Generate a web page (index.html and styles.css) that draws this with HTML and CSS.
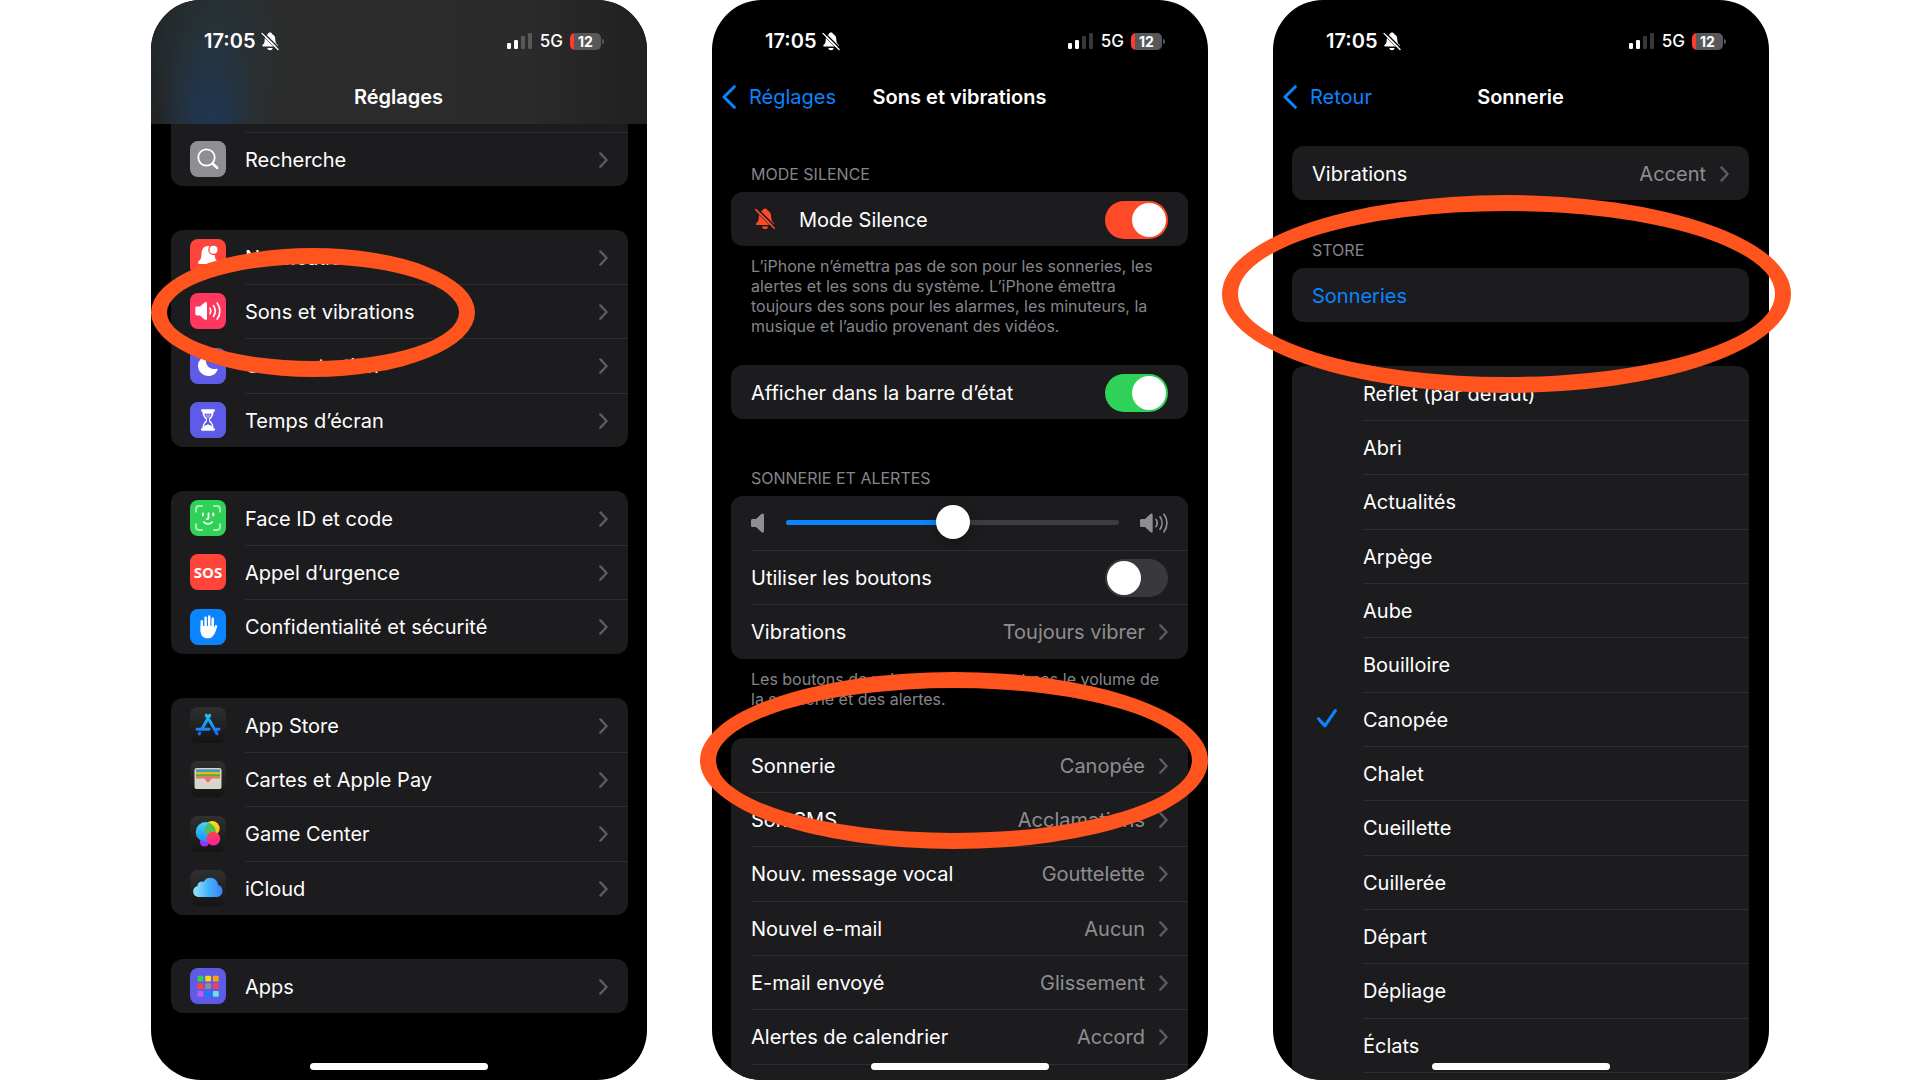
FILE: index.html
```html
<!DOCTYPE html>
<html lang="fr">
<head>
<meta charset="utf-8">
<title>Réglages – Sons et vibrations – Sonnerie</title>
<link rel="stylesheet" href="styles.css">
</head>
<body>
<svg class="sprite" aria-hidden="true">
  <defs>
    <linearGradient id="g-dark" x1="0" y1="0" x2="0" y2="1"><stop offset="0" stop-color="#303031"/><stop offset="1" stop-color="#141415"/></linearGradient>
    <linearGradient id="g-store" gradientUnits="userSpaceOnUse" x1="0" y1="6" x2="0" y2="29"><stop offset="0" stop-color="#1ccbfb"/><stop offset="1" stop-color="#1a62f5"/></linearGradient>
    <linearGradient id="g-cloud" x1="0" y1="0" x2="1" y2="0"><stop offset="0" stop-color="#9be3fd"/><stop offset=".5" stop-color="#46b4fb"/><stop offset="1" stop-color="#3b7ff5"/></linearGradient>
    <linearGradient id="g-blue" x1="0" y1="0" x2="0" y2="1"><stop offset="0" stop-color="#45d5fb"/><stop offset="1" stop-color="#1a8df8"/></linearGradient>
    <linearGradient id="g-yellow" x1="0" y1="0" x2="1" y2="1"><stop offset="0" stop-color="#f7f017"/><stop offset="1" stop-color="#fdb813"/></linearGradient>
    <linearGradient id="g-pink" x1="0" y1="0" x2="0" y2="1"><stop offset="0" stop-color="#fd4052"/><stop offset="1" stop-color="#fb1fa5"/></linearGradient>
    <symbol id="chevron" viewBox="0 0 9 16"><path d="M1.400 1.400 7.600 8l-6.200 6.600" fill="none" stroke="currentColor" stroke-width="2.400" stroke-linecap="round" stroke-linejoin="round"/></symbol>
    <symbol id="back" viewBox="0 0 14 24"><path d="M12.300 1.700 2 12l10.300 10.300" fill="none" stroke="currentColor" stroke-width="3" stroke-linecap="round" stroke-linejoin="round"/></symbol>
    <symbol id="bell-off" viewBox="0 0 20 22">
      <path d="M10 .6c1.300 0 2.300.8 2.600 2 2.300.9 3.400 2.900 3.500 5.700.1 3.700.9 5.100 2.600 6.600.7.6.6 2-.6 2H2.100c-1.200 0-1.300-1.400-.6-2 1.700-1.500 2.300-2.900 2.400-6.600.1-2.800 1.200-4.800 3.500-5.700.3-1.200 1.300-2 2.600-2zM6.900 18.500h6.200c-.3 1.600-1.500 2.600-3.100 2.600s-2.800-1-3.100-2.600z" fill="currentColor"/>
      <path d="M1.900.2 21 19.300" stroke="var(--behind)" stroke-width="1.600"/>
      <path d="M.2 2.700 18.700 21" stroke="var(--behind)" stroke-width="1"/>
      <path d="M.8 1.600 19.300 20.300" stroke="currentColor" stroke-width="1.600" stroke-linecap="round"/>
    </symbol>
    <symbol id="signal" viewBox="0 0 25 16">
      <rect x="0" y="10" width="4" height="6" rx="1.200" fill="#fff"/><rect x="7" y="7" width="4" height="9" rx="1.200" fill="#fff"/>
      <rect x="14" y="3" width="4" height="13" rx="1.200" fill="#fff" opacity=".22"/><rect x="21" y="0" width="4" height="16" rx="1.200" fill="#fff" opacity=".22"/>
    </symbol>
    <symbol id="speaker" viewBox="0 0 14 20"><path d="M0 7.500C0 6.500.7 6 1.600 6H5L10.400 1c1.100-1 2.600-.6 2.600 1v16c0 1.600-1.500 2-2.600 1L5 14H1.600C.7 14 0 13.500 0 12.500z" fill="currentColor"/></symbol>
    <symbol id="speaker-loud" viewBox="0 0 28 20">
      <path d="M0 7.500C0 6.500.7 6 1.600 6H5L10.400 1c1.100-1 2.300-.6 2.300 1v16c0 1.600-1.200 2-2.300 1L5 14H1.600C.7 14 0 13.500 0 12.500z" fill="currentColor"/>
      <path d="M16 6.500c1.400 2 1.400 5 0 7M20 3.800c2.700 3.700 2.700 8.700 0 12.400M24 1.200c3.900 5.300 3.900 12.300 0 17.600" fill="none" stroke="currentColor" stroke-width="1.700" stroke-linecap="round"/>
    </symbol>
    <symbol id="i-search" viewBox="0 0 36 36"><rect width="36" height="36" rx="8" fill="#8e8e93"/><circle cx="16.500" cy="16.500" r="8.200" fill="none" stroke="#fff" stroke-width="1.800"/><path d="m22.500 22.500 4.600 4.300" stroke="#fff" stroke-width="2.600" stroke-linecap="round"/></symbol>
    <symbol id="i-notif" viewBox="0 0 36 36"><rect width="36" height="36" rx="8" fill="#ff453a"/><path d="M18 7c-4.300 0-6.300 3-6.500 8-.1 4-.8 5.400-2.700 7.300-1.300 1.300-.9 2.700.6 2.700h17.200c1.500 0 1.900-1.400.6-2.700-1.500-1.500-2.300-3.300-2.600-6.300-4 0-6.300-2.300-6.300-5.300 0-1.400.4-2.600 1.200-3.500zM14.500 26.500h7c-.4 1.700-1.700 2.700-3.500 2.700s-3.100-1-3.500-2.700z" fill="#fff"/><circle cx="23.500" cy="10.700" r="4" fill="#fff"/></symbol>
    <symbol id="i-sound" viewBox="0 0 36 36"><rect width="36" height="36" rx="8" fill="#ff375f"/><path d="M5.300 15.200c0-1 .6-1.600 1.600-1.600h3l4.700-4.200c1-.9 2.400-.5 2.400 1v15.200c0 1.500-1.400 1.900-2.400 1L9.900 22.400h-3c-1 0-1.600-.6-1.600-1.600z" fill="#fff"/><path d="M20 15.300c1 1.700 1 3.700 0 5.400M23.500 12.600c2.200 3.300 2.200 7.500 0 10.800M27.200 9.900c3.500 4.800 3.500 11.400 0 16.200" fill="none" stroke="#fff" stroke-width="1.700" stroke-linecap="round"/></symbol>
    <symbol id="i-moon" viewBox="0 0 36 36"><rect width="36" height="36" rx="8" fill="#5e5ce6"/><path d="M15.500 8.200c.8-.3 1.400.3 1 1.200-2.300 6.800 2.700 12.800 9.800 11.300 1-.2 1.600.4 1.200 1.300C26 25.700 22.700 28 18.700 28 12.800 28 8 23.600 8 17.800c0-4.500 3-8.200 7.500-9.600z" fill="#fff"/></symbol>
    <symbol id="i-hourglass" viewBox="0 0 36 36"><rect width="36" height="36" rx="8" fill="#5e5ce6"/><path d="M12.500 7.200h11c1 0 1.500.5 1.500 1.300 0 .7-.5 1.200-1.300 1.200-.2 3.800-1.800 6-4 8.300 2.200 2.300 3.800 4.500 4 8.300.8 0 1.300.5 1.300 1.200 0 .8-.5 1.300-1.500 1.300h-11c-1 0-1.500-.5-1.500-1.300 0-.7.5-1.200 1.300-1.200.2-3.800 1.800-6 4-8.300-2.200-2.300-3.800-4.500-4-8.300-.8 0-1.300-.5-1.300-1.200 0-.8.500-1.300 1.500-1.300z" fill="#fff"/><path d="M14.200 11.800h7.600c-.5 1.900-1.500 3.400-2.800 4.700v3c1.300 1.300 2.600 2.800 2.900 4.700L18 22.300l-3.900 1.900c.3-1.900 1.600-3.400 2.900-4.700v-3c-1.300-1.300-2.300-2.800-2.800-4.700z" fill="#5e5ce6"/><path d="M15 12.800h6l-3 4z" fill="#fff" opacity=".4"/></symbol>
    <symbol id="i-face" viewBox="0 0 36 36"><rect width="36" height="36" rx="8" fill="#30d158"/><path d="M6 12.500V9.200C6 7 7.200 6 9.200 6h3.600M23.200 6h3.600C28.900 6 30 7 30 9.200v3.300M30 23.500v3.300c0 2.200-1.100 3.200-3.200 3.200h-3.600M12.800 30H9.200C7.200 30 6 29 6 26.800v-3.300" fill="none" stroke="#a5ecb7" stroke-width="2"/><path d="M13 13.500v2M23.300 13.500v2M18.500 13.500v4.300c0 .9-.6 1.400-1.600 1.400M13.800 22.200c2.400 2.200 6 2.200 8.400 0" fill="none" stroke="#fff" stroke-width="1.800" stroke-linecap="round"/></symbol>
    <symbol id="i-hand" viewBox="0 0 36 36"><rect width="36" height="36" rx="8" fill="#0a84ff"/><path d="M11.800 12.200V22M15.600 8.800V20M19.200 7.600V20M22.700 9.700V21M26 17.300 23.500 24" stroke="#fff" stroke-width="2.500" stroke-linecap="round"/><path d="M10.600 17h13.200v3.500l2.200-2.300c0 2.600-1 6-2.600 8.200-1.300 1.900-3.100 2.900-5.700 2.900-4.600 0-7.100-2.700-7.100-7.300z" fill="#fff"/></symbol>
    <symbol id="i-store" viewBox="0 0 36 36"><rect width="36" height="36" rx="8" fill="url(#g-dark)"/><g fill="none" stroke="url(#g-store)" stroke-width="3" stroke-linecap="round"><path d="m19.800 8.200-7.600 13.300M16.200 8.200l1.200 2M19.500 13.500 27 26.800M7 22.300h12M24.500 22.300H29M9.700 26l-.5.900"/></g></symbol>
    <symbol id="i-wallet" viewBox="0 0 36 36"><rect width="36" height="36" rx="8" fill="url(#g-dark)"/><rect x="4.500" y="7" width="27" height="21" rx="2" fill="#d8d6cc"/><path d="M6 8.300h24v3H6z" fill="#429bbd"/><path d="M6 11h24v2.500H6z" fill="#f7b016"/><path d="M6 13.200h24v2.500H6z" fill="#4bae45"/><path d="M6 15.500h24v2h-8c-1.300 0-2 3.700-4 3.700s-2.700-3.700-4-3.700H6z" fill="#f26e5e"/></symbol>
    <symbol id="i-game" viewBox="0 0 36 36"><rect width="36" height="36" rx="8" fill="url(#g-dark)"/><circle cx="14.500" cy="26" r="4.600" fill="#9a2ff5"/><circle cx="22.200" cy="12.600" r="7.500" fill="url(#g-yellow)"/><circle cx="15.700" cy="16" r="10" fill="url(#g-blue)"/><path d="M15 14.500c0-3 .9-5.200 3.300-7.800 4.700 1.300 7.400 5 7.400 9.300 0 1.400-.2 2.400-.6 3.300C19.500 21 15 18.500 15 14.500z" fill="#50bf55"/><circle cx="23.300" cy="22.600" r="6.900" fill="url(#g-pink)"/></symbol>
    <symbol id="i-cloud" viewBox="0 0 36 36"><rect width="36" height="36" rx="8" fill="url(#g-dark)"/><path d="M9 27c-3.400 0-5.800-2.300-5.800-5.500 0-2.700 1.600-4.800 4.200-5.400.1-3.600 3.400-5.400 6.200-4.200C15 9.300 17.300 7.700 20.200 7.700c4.300 0 7.800 3.200 8 7.400 2.600.7 4.300 3 4.300 5.800 0 3.500-2.600 6.100-6.200 6.100z" fill="url(#g-cloud)"/></symbol>
    <symbol id="i-apps" viewBox="0 0 36 36"><rect width="36" height="36" rx="8" fill="#5e5ce6"/><g><rect x="7.500" y="7.700" width="5.800" height="5.800" rx="1" fill="#30d158"/><rect x="15.200" y="7.700" width="5.800" height="5.800" rx="1" fill="#ffd60a"/><rect x="22.900" y="7.700" width="5.800" height="5.800" rx="1" fill="#ff9f0a"/><rect x="7.500" y="15.300" width="5.800" height="5.800" rx="1" fill="#ff453a"/><rect x="15.200" y="15.300" width="5.800" height="5.800" rx="1" fill="#8e8e93"/><rect x="22.900" y="15.300" width="5.800" height="5.800" rx="1" fill="#ff375f"/><rect x="7.500" y="23" width="5.800" height="5.800" rx="1" fill="#bf5af2"/><rect x="15.200" y="23" width="5.800" height="5.800" rx="1" fill="#0a84ff"/><rect x="22.900" y="23" width="5.800" height="5.800" rx="1" fill="#66e5e0"/></g></symbol>
  </defs>
</svg>

<main class="stage">
  <section class="shot">
    <div class="phone">
      <header class="bar bar-tinted">
        <div class="status"><span class="time">17:05</span><svg class="status-bell"><use href="#bell-off"/></svg><svg class="signal"><use href="#signal"/></svg><span class="network">5G</span><span class="battery">12</span></div>
        <div class="nav"><h1 class="nav-title">Réglages</h1></div>
      </header>
      <div class="content">
        <nav class="group group-cut">
          <a class="row row-divided" href="#"><svg class="icon"><use href="#i-search"/></svg><span class="cell">Recherche<svg class="chevron"><use href="#chevron"/></svg></span></a>
        </nav>
        <nav class="group">
          <a class="row" href="#"><svg class="icon"><use href="#i-notif"/></svg><span class="cell">Notifications<svg class="chevron"><use href="#chevron"/></svg></span></a>
          <a class="row" href="#"><svg class="icon"><use href="#i-sound"/></svg><span class="cell">Sons et vibrations<svg class="chevron"><use href="#chevron"/></svg></span></a>
          <a class="row" href="#"><svg class="icon"><use href="#i-moon"/></svg><span class="cell">Concentration<svg class="chevron"><use href="#chevron"/></svg></span></a>
          <a class="row" href="#"><svg class="icon"><use href="#i-hourglass"/></svg><span class="cell">Temps d’écran<svg class="chevron"><use href="#chevron"/></svg></span></a>
        </nav>
        <nav class="group">
          <a class="row" href="#"><svg class="icon"><use href="#i-face"/></svg><span class="cell">Face ID et code<svg class="chevron"><use href="#chevron"/></svg></span></a>
          <a class="row" href="#"><span class="icon icon-sos">SOS</span><span class="cell">Appel d’urgence<svg class="chevron"><use href="#chevron"/></svg></span></a>
          <a class="row" href="#"><svg class="icon"><use href="#i-hand"/></svg><span class="cell">Confidentialité et sécurité<svg class="chevron"><use href="#chevron"/></svg></span></a>
        </nav>
        <nav class="group">
          <a class="row" href="#"><svg class="icon"><use href="#i-store"/></svg><span class="cell">App Store<svg class="chevron"><use href="#chevron"/></svg></span></a>
          <a class="row" href="#"><svg class="icon"><use href="#i-wallet"/></svg><span class="cell">Cartes et Apple Pay<svg class="chevron"><use href="#chevron"/></svg></span></a>
          <a class="row" href="#"><svg class="icon"><use href="#i-game"/></svg><span class="cell">Game Center<svg class="chevron"><use href="#chevron"/></svg></span></a>
          <a class="row" href="#"><svg class="icon"><use href="#i-cloud"/></svg><span class="cell">iCloud<svg class="chevron"><use href="#chevron"/></svg></span></a>
        </nav>
        <nav class="group">
          <a class="row" href="#"><svg class="icon"><use href="#i-apps"/></svg><span class="cell">Apps<svg class="chevron"><use href="#chevron"/></svg></span></a>
        </nav>
      </div>
      <div class="home-indicator"></div>
    </div>
    <div class="ring ring-sounds"></div>
  </section>

  <section class="shot">
    <div class="phone">
      <header class="bar">
        <div class="status"><span class="time">17:05</span><svg class="status-bell"><use href="#bell-off"/></svg><svg class="signal"><use href="#signal"/></svg><span class="network">5G</span><span class="battery">12</span></div>
        <div class="nav"><a class="nav-back" href="#"><svg class="back-arrow"><use href="#back"/></svg>Réglages</a><h1 class="nav-title">Sons et vibrations</h1></div>
      </header>
      <div class="content content-detail">
        <h2 class="section-label">MODE SILENCE</h2>
        <div class="group">
          <div class="row"><svg class="mode-bell"><use href="#bell-off"/></svg><span class="cell"><label for="silence">Mode Silence</label><input class="switch switch-red" type="checkbox" id="silence" checked></span></div>
        </div>
        <p class="footnote">L’iPhone n’émettra pas de son pour les sonneries, les alertes et les sons du système. L’iPhone émettra toujours des sons pour les alarmes, les minuteurs, la musique et l’audio provenant des vidéos.</p>
        <div class="group group-near">
          <div class="row"><span class="cell"><label for="statusbar">Afficher dans la barre d’état</label><input class="switch" type="checkbox" id="statusbar" checked></span></div>
        </div>
        <h2 class="section-label section-label-far">SONNERIE ET ALERTES</h2>
        <div class="group">
          <div class="row"><span class="cell volume"><svg class="volume-low"><use href="#speaker"/></svg><input class="slider" type="range" min="0" max="100" value="50" aria-label="Volume de la sonnerie"><svg class="volume-high"><use href="#speaker-loud"/></svg></span></div>
          <div class="row"><span class="cell"><label for="buttons">Utiliser les boutons</label><input class="switch" type="checkbox" id="buttons"></span></div>
          <a class="row" href="#"><span class="cell">Vibrations<span class="value">Toujours vibrer</span><svg class="chevron"><use href="#chevron"/></svg></span></a>
        </div>
        <p class="footnote">Les boutons de volume n’affecteront pas le volume de la sonnerie et des alertes.</p>
        <nav class="group group-near">
          <a class="row" href="#"><span class="cell">Sonnerie<span class="value">Canopée</span><svg class="chevron"><use href="#chevron"/></svg></span></a>
          <a class="row" href="#"><span class="cell">Son SMS<span class="value">Acclamations</span><svg class="chevron"><use href="#chevron"/></svg></span></a>
          <a class="row" href="#"><span class="cell">Nouv. message vocal<span class="value">Gouttelette</span><svg class="chevron"><use href="#chevron"/></svg></span></a>
          <a class="row" href="#"><span class="cell">Nouvel e-mail<span class="value">Aucun</span><svg class="chevron"><use href="#chevron"/></svg></span></a>
          <a class="row" href="#"><span class="cell">E-mail envoyé<span class="value">Glissement</span><svg class="chevron"><use href="#chevron"/></svg></span></a>
          <a class="row" href="#"><span class="cell">Alertes de calendrier<span class="value">Accord</span><svg class="chevron"><use href="#chevron"/></svg></span></a>
          <div class="row"><span class="cell"></span></div>
        </nav>
      </div>
      <div class="home-indicator"></div>
    </div>
    <div class="ring ring-ringtone"></div>
  </section>

  <section class="shot">
    <div class="phone">
      <header class="bar">
        <div class="status"><span class="time">17:05</span><svg class="status-bell"><use href="#bell-off"/></svg><svg class="signal"><use href="#signal"/></svg><span class="network">5G</span><span class="battery">12</span></div>
        <div class="nav"><a class="nav-back" href="#"><svg class="back-arrow"><use href="#back"/></svg>Retour</a><h1 class="nav-title">Sonnerie</h1></div>
      </header>
      <div class="content content-detail content-spaced">
        <nav class="group">
          <a class="row" href="#"><span class="cell">Vibrations<span class="value">Accent</span><svg class="chevron"><use href="#chevron"/></svg></span></a>
        </nav>
        <h2 class="section-label">STORE</h2>
        <nav class="group">
          <a class="row row-link" href="#"><span class="cell">Sonneries</span></a>
        </nav>
        <div class="group" role="radiogroup" aria-label="Sonnerie">
          <label class="row"><input class="tick" type="radio" name="tone"><span class="cell">Reflet (par défaut)</span></label>
          <label class="row"><input class="tick" type="radio" name="tone"><span class="cell">Abri</span></label>
          <label class="row"><input class="tick" type="radio" name="tone"><span class="cell">Actualités</span></label>
          <label class="row"><input class="tick" type="radio" name="tone"><span class="cell">Arpège</span></label>
          <label class="row"><input class="tick" type="radio" name="tone"><span class="cell">Aube</span></label>
          <label class="row"><input class="tick" type="radio" name="tone"><span class="cell">Bouilloire</span></label>
          <label class="row"><input class="tick" type="radio" name="tone" checked><span class="cell">Canopée</span></label>
          <label class="row"><input class="tick" type="radio" name="tone"><span class="cell">Chalet</span></label>
          <label class="row"><input class="tick" type="radio" name="tone"><span class="cell">Cueillette</span></label>
          <label class="row"><input class="tick" type="radio" name="tone"><span class="cell">Cuillerée</span></label>
          <label class="row"><input class="tick" type="radio" name="tone"><span class="cell">Départ</span></label>
          <label class="row"><input class="tick" type="radio" name="tone"><span class="cell">Dépliage</span></label>
          <label class="row"><input class="tick" type="radio" name="tone"><span class="cell">Éclats</span></label>
          <div class="row"><span class="tick"></span><span class="cell"></span></div>
        </div>
      </div>
      <div class="home-indicator"></div>
    </div>
    <div class="ring ring-store"></div>
  </section>
</main>
</body>
</html>
```
FILE: styles.css
```css
* {
  box-sizing: border-box;
}

body {
  margin: 0;
  background: #fff;
  color: #fff;
  font-family: Inter, "Liberation Sans", sans-serif;
  font-size: 20px;
  line-height: 24px;
}

a {
  color: inherit;
  text-decoration: none;
}

h1,
h2,
p {
  margin: 0;
}

.sprite {
  position: absolute;
  width: 0;
  height: 0;
}

.stage {
  display: flex;
  gap: 65px;
  height: 100vh;
  padding: 0 151px;
  overflow: hidden;
}

.shot {
  position: relative;
  flex: 1 1 0;
  min-width: 0;
}

.phone {
  position: relative;
  height: 100%;
  overflow: hidden;
  border-radius: 50px;
  background: #000;
}

/* Status and navigation bars */

.bar {
  --behind: #000;
}

.bar-tinted {
  --behind: #292b2c;
  background:
    radial-gradient(ellipse 52px 100px at 58px 124px, #1f3754, transparent),
    radial-gradient(ellipse 80px 120px at 62px 50px, #26343a, transparent),
    linear-gradient(to right, #212223, #2c2c2c 20%, #2b2b2b 75%, #202020);
}

.status {
  display: flex;
  align-items: center;
  height: 70px;
  padding: 12px 43px 0 53px;
}

.time {
  font-weight: 600;
}

.status-bell {
  width: 18px;
  height: 19px;
  margin-left: 6px;
}

.signal {
  width: 25px;
  height: 16px;
  margin-left: auto;
}

.network {
  margin-left: 8px;
  font-size: 17px;
  font-weight: 500;
}

.battery {
  position: relative;
  width: 31px;
  height: 17px;
  margin: 0 3px 0 7px;
  border-radius: 5px;
  background: linear-gradient(to right, #ff3b30 4px, #58585a 4px);
  font-size: 14px;
  font-weight: 700;
  line-height: 17px;
  text-align: center;
}

.battery::after {
  content: "";
  position: absolute;
  top: 6px;
  right: -3px;
  width: 2px;
  height: 5px;
  border-radius: 0 2px 2px 0;
  background: #58585a;
}

.nav {
  display: grid;
  grid-template-columns: 1fr auto 1fr;
  align-items: center;
  height: 54px;
  padding: 0 11px 0 10px;
}

.nav-back {
  display: flex;
  align-items: center;
  gap: 13px;
  color: #0a84ff;
}

.back-arrow {
  width: 14px;
  height: 24px;
}

.nav-title {
  grid-column: 2;
  font-size: 20px;
  font-weight: 600;
}

/* Grouped lists */

.content {
  padding: 0 19px 0 20px;
}

.content-detail {
  padding: 0 20px 0 19px;
}

.content-spaced {
  padding-top: 22px;
}

.group {
  overflow: hidden;
  border-radius: 12px;
  background: #1c1c1e;
}

.group + .group {
  margin-top: 44px;
}

.group-cut {
  padding-top: 8px;
  border-radius: 0 0 12px 12px;
}

.group-near {
  margin-top: 29px;
}

.row {
  display: flex;
  align-items: center;
  height: 54px;
  padding-left: 20px;
}

.row:nth-child(3n) {
  height: 55px;
}

.row-link {
  color: #0a84ff;
}

.row:has(.icon) {
  padding-left: 19px;
}

.cell {
  display: flex;
  flex: 1;
  align-items: center;
  align-self: stretch;
  padding-right: 20px;
  border-top: 1px solid transparent;
}

.row + .row .cell,
.row-divided .cell {
  border-top-color: #2e2e31;
}

.icon {
  width: 36px;
  height: 36px;
  margin-right: 19px;
}

.icon-sos {
  border-radius: 8px;
  background: #ff453a;
  font-family: "Liberation Sans Narrow", "Open Sans", sans-serif;
  font-size: 15px;
  font-weight: 700;
  line-height: 36px;
  text-align: center;
}

.chevron {
  width: 9px;
  height: 16px;
  margin-left: auto;
  color: #5c5c60;
}

.value {
  margin-left: auto;
  color: #8e8e93;
}

.value + .chevron {
  margin-left: 14px;
}

.section-label {
  padding: 40px 20px 8px;
  color: #85858b;
  font-size: 16px;
  font-weight: 400;
  line-height: 20px;
}

.section-label-far {
  padding-top: 49px;
}

.footnote {
  padding: 10px 16px 0 20px;
  color: #85858b;
  font-size: 16px;
  line-height: 20px;
}

/* Controls */

.mode-bell {
  --behind: #1c1c1e;
  width: 20px;
  height: 22px;
  margin: 0 24px 0 4px;
  color: #ff4a2a;
}

.switch {
  appearance: none;
  width: 63px;
  height: 38px;
  margin: 0 0 0 auto;
  padding: 2px;
  border-radius: 19px;
  background: #39393d;
}

.switch::before {
  content: "";
  display: block;
  width: 34px;
  height: 34px;
  border-radius: 50%;
  background: #fff;
}

.switch:checked {
  background: #30d158;
}

.switch-red:checked {
  background: #ff4a2a;
}

.switch:checked::before {
  margin-left: auto;
}

.volume {
  gap: 21px;
  padding-bottom: 2px;
  color: #8e8e93;
}

.volume-low {
  width: 14px;
  height: 20px;
}

.volume-high {
  width: 28px;
  height: 20px;
}

.slider {
  appearance: none;
  flex: 1;
  min-width: 0;
  height: 34px;
  margin: 0;
  background: none;
}

.slider::-webkit-slider-runnable-track {
  height: 5px;
  border-radius: 3px;
  background: linear-gradient(to right, #0a84ff 50%, #3d3d41 50%);
}

.slider::-webkit-slider-thumb {
  appearance: none;
  width: 34px;
  height: 34px;
  margin-top: -15px;
  border-radius: 50%;
  background: #fff;
  box-shadow: 0 4px 12px rgba(0, 0, 0, 0.3);
}

.tick {
  appearance: none;
  width: 28px;
  height: 20px;
  margin: 0 23px 0 0;
}

.tick:checked::before {
  content: "";
  display: block;
  width: 20px;
  height: 19px;
  margin-left: 5px;
  background: #0a84ff;
  clip-path: polygon(0 50%, 3% 44%, 10% 43%, 39% 75%, 86% 3%, 93% 0, 99% 4%, 99% 12%, 46% 93%, 39% 98%, 32% 94%, 2% 57%);
}

.home-indicator {
  position: absolute;
  bottom: 10px;
  left: 50%;
  width: 178px;
  height: 7px;
  margin-left: -89px;
  border-radius: 4px;
  background: #fff;
}

/* Markers drawn over the screens */

.ring {
  position: absolute;
  border: 16px solid #ff541d;
  border-radius: 50%;
  pointer-events: none;
}

.ring-sounds {
  top: 248px;
  left: 0;
  width: 324px;
  height: 129px;
}

.ring-ringtone {
  top: 672px;
  left: -12px;
  right: 0;
  height: 177px;
}

.ring-store {
  top: 195px;
  left: -51px;
  right: -22px;
  height: 198px;
}
```
